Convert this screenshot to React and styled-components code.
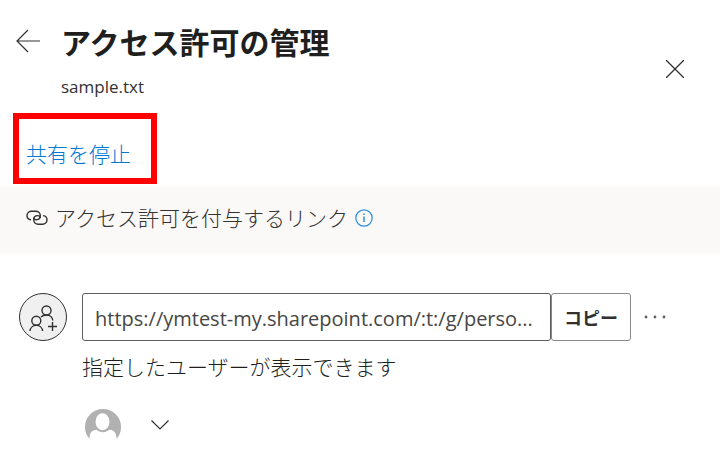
import React, { useState } from "react";
import styled, { createGlobalStyle } from "styled-components";

const AccessPanel = () => {
  const [open, setOpen] = useState(false);

  return (
    <>
      <GlobalStyle />
      <StPanel>
        <StHeader>
          <StIconButton aria-label="戻る">
            <BackIcon />
          </StIconButton>
          <StTitleBox>
            <h1>アクセス許可の管理</h1>
            <p>sample.txt</p>
          </StTitleBox>
          <StCloseButton aria-label="閉じる">
            <CloseIcon />
          </StCloseButton>
        </StHeader>

        <StHighlight>
          <StStopLink href="#stop">共有を停止</StStopLink>
        </StHighlight>

        <StSection>
          <LinkIcon />
          <h2>アクセス許可を付与するリンク</h2>
          <StIconButton aria-label="情報">
            <InfoIcon />
          </StIconButton>
        </StSection>

        <StLinkRow>
          <StBadge>
            <PeopleAddIcon />
          </StBadge>
          <StLinkBody>
            <StCopyRow>
              <StUrlInput
                readOnly
                aria-label="共有リンク"
                value="https://ymtest-my.sharepoint.com/:t:/g/perso..."
              />
              <StCopyButton>コピー</StCopyButton>
              <StMoreButton aria-label="その他">
                <MoreIcon />
              </StMoreButton>
            </StCopyRow>
            <StDesc>指定したユーザーが表示できます</StDesc>
            <StUsers>
              <AvatarIcon />
              <StIconButton
                aria-label="ユーザーを表示"
                aria-expanded={open}
                onClick={() => setOpen(!open)}
              >
                <ChevronIcon />
              </StIconButton>
            </StUsers>
          </StLinkBody>
        </StLinkRow>
      </StPanel>
    </>
  );
};

export default AccessPanel;

const BackIcon = () => (
  <svg width="24" height="24" viewBox="0 0 24 24" fill="none" stroke="#323130" strokeWidth="1.2">
    <path d="M24 12H1M12 1L1 12l11 11" />
  </svg>
);

const CloseIcon = () => (
  <svg width="18" height="18" viewBox="0 0 18 18" fill="none" stroke="#323130" strokeWidth="1.3">
    <path d="M0 0l18 18M18 0L0 18" />
  </svg>
);

const LinkIcon = () => (
  <svg width="22" height="16" viewBox="0 0 22 16" fill="none" stroke="#323130" strokeWidth="1.4">
    <path d="M5 9.800C2.500 9.500 1 7.800 1 5.600 1 3 3 1.200 5.500 1.200h4.300c2.600 0 4.500 1.900 4.500 4.400 0 2.400-1.700 4.200-4 4.200-1.500 0-2.600-.8-2.600-2.200" />
    <path d="M17 5.600c2.500.3 4 2 4 4.200 0 2.600-2 4.400-4.500 4.400h-4.300c-2.600 0-4.500-1.900-4.500-4.400 0-2.400 1.700-4.200 4-4.200 1.500 0 2.600.8 2.600 2.200" />
  </svg>
);

const InfoIcon = () => (
  <svg width="18" height="18" viewBox="0 0 18 18" fill="none" stroke="#2b90dc" strokeWidth="1.2">
    <circle cx="9" cy="9" r="8.200" />
    <path d="M9 7.500v5.500M9 4.500v1.500" strokeWidth="1.500" />
  </svg>
);

const PeopleAddIcon = () => (
  <svg width="28" height="28" viewBox="0 0 28 28" fill="none" stroke="#323130" strokeWidth="1.400">
    <circle cx="17.500" cy="7.500" r="4.500" />
    <circle cx="7.300" cy="17.800" r="4.500" />
    <path d="M1 28c.3-3.300 3-5.700 6.300-5.700s6 2.400 6.300 5.700" />
    <path d="M12 14.100c1.300-1.400 3.300-2.100 5.500-2.100 3.400 0 6 2.300 6.300 5.500" />
    <path d="M19 23.500h9M23.500 19v9" />
  </svg>
);

const MoreIcon = () => (
  <svg width="22" height="4" viewBox="0 0 22 4" fill="#605e5c">
    <circle cx="2" cy="2" r="1.400" />
    <circle cx="11" cy="2" r="1.400" />
    <circle cx="20" cy="2" r="1.400" />
  </svg>
);

const AvatarIcon = () => (
  <svg width="36" height="31" viewBox="0 0 36 31">
    <path
      fill="#b1b1b1"
      d="M4.500 30A18 18 0 1 1 31.500 30C31.500 24 29.500 21.200 24.500 20.800C20.500 24 15 24 11.500 20.800C6.500 21.200 4.500 24 4.500 30Z"
    />
    <ellipse cx="17.500" cy="12.800" rx="7" ry="8.500" fill="#fff" />
  </svg>
);

const ChevronIcon = () => (
  <svg width="18" height="10" viewBox="0 0 18 10" fill="none" stroke="#323130" strokeWidth="1.200">
    <path d="M.5.500L9 9 17.500.500" />
  </svg>
);

const GlobalStyle = createGlobalStyle`
  * {
    box-sizing: border-box;
  }
  body {
    margin: 0;
    background-color: #fff;
    color: #323130;
    font-family: "Open Sans", "Noto Sans CJK JP", sans-serif;
  }
  h1, h2, p {
    margin: 0;
  }
  button {
    font-family: inherit;
    color: inherit;
    cursor: pointer;
  }
  svg {
    display: block;
    flex-shrink: 0;
  }
`;

const StPanel = styled.main`
  width: 100%;
`;

const StIconButton = styled.button`
  padding: 0;
  border: none;
  background-color: transparent;
`;

const StHeader = styled.header`
  display: flex;
  align-items: flex-start;
  padding: 23px 36px 0 16px;
  > button:first-child {
    margin-top: 6px;
  }
`;

const StTitleBox = styled.div`
  flex: 1;
  margin-left: 21px;
  h1 {
    color: #201f1e;
    font-size: 30px;
    font-weight: 700;
    line-height: 40px;
  }
  p {
    margin-top: 12px;
    font-size: 17px;
    line-height: 24px;
  }
`;

const StCloseButton = styled(StIconButton)`
  margin-top: 37px;
`;

const StHighlight = styled.div`
  width: fit-content;
  margin: 14px 0 2px 13px;
  padding: 20px 20px 9px 7px;
  border: 6px solid #ff0000;
`;

const StStopLink = styled.a`
  display: block;
  color: #0078d4;
  font-size: 21px;
  font-weight: 300;
  line-height: 30px;
  text-decoration: none;
`;

const StSection = styled.div`
  display: flex;
  align-items: center;
  padding: 17px 26px 21px;
  background-color: #faf9f8;
  h2 {
    margin: 0 7px;
    font-size: 21px;
    font-weight: 300;
    line-height: 30px;
  }
`;

const StLinkRow = styled.div`
  display: flex;
  padding: 39px 54px 0 19px;
`;

const StBadge = styled.div`
  display: flex;
  flex-shrink: 0;
  align-items: center;
  justify-content: center;
  width: 48px;
  height: 48px;
  border: 1px solid #323130;
  border-radius: 50%;
  background-color: #f0f0f0;
`;

const StLinkBody = styled.div`
  flex: 1;
  min-width: 0;
  margin-left: 15px;
`;

const StCopyRow = styled.div`
  display: flex;
  align-items: center;
`;

const StUrlInput = styled.input`
  flex: 1;
  min-width: 0;
  height: 48px;
  padding: 2px 12px 0;
  border: 1px solid #605e5c;
  border-radius: 3px;
  background-color: #fff;
  color: #484644;
  font-family: inherit;
  font-size: 20px;
  text-overflow: ellipsis;
`;

const StCopyButton = styled.button`
  height: 48px;
  padding: 0 12px;
  border: 1px solid #8a8886;
  border-radius: 3px;
  background-color: #fff;
  font-size: 18px;
  font-weight: 700;
`;

const StMoreButton = styled(StIconButton)`
  margin-left: 13px;
`;

const StDesc = styled.p`
  margin-top: 11px;
  color: #201f1e;
  font-size: 21px;
  font-weight: 300;
  line-height: 30px;
`;

const StUsers = styled.div`
  display: flex;
  align-items: center;
  gap: 30px;
  margin-top: 27px;
  padding-left: 3px;
`;
